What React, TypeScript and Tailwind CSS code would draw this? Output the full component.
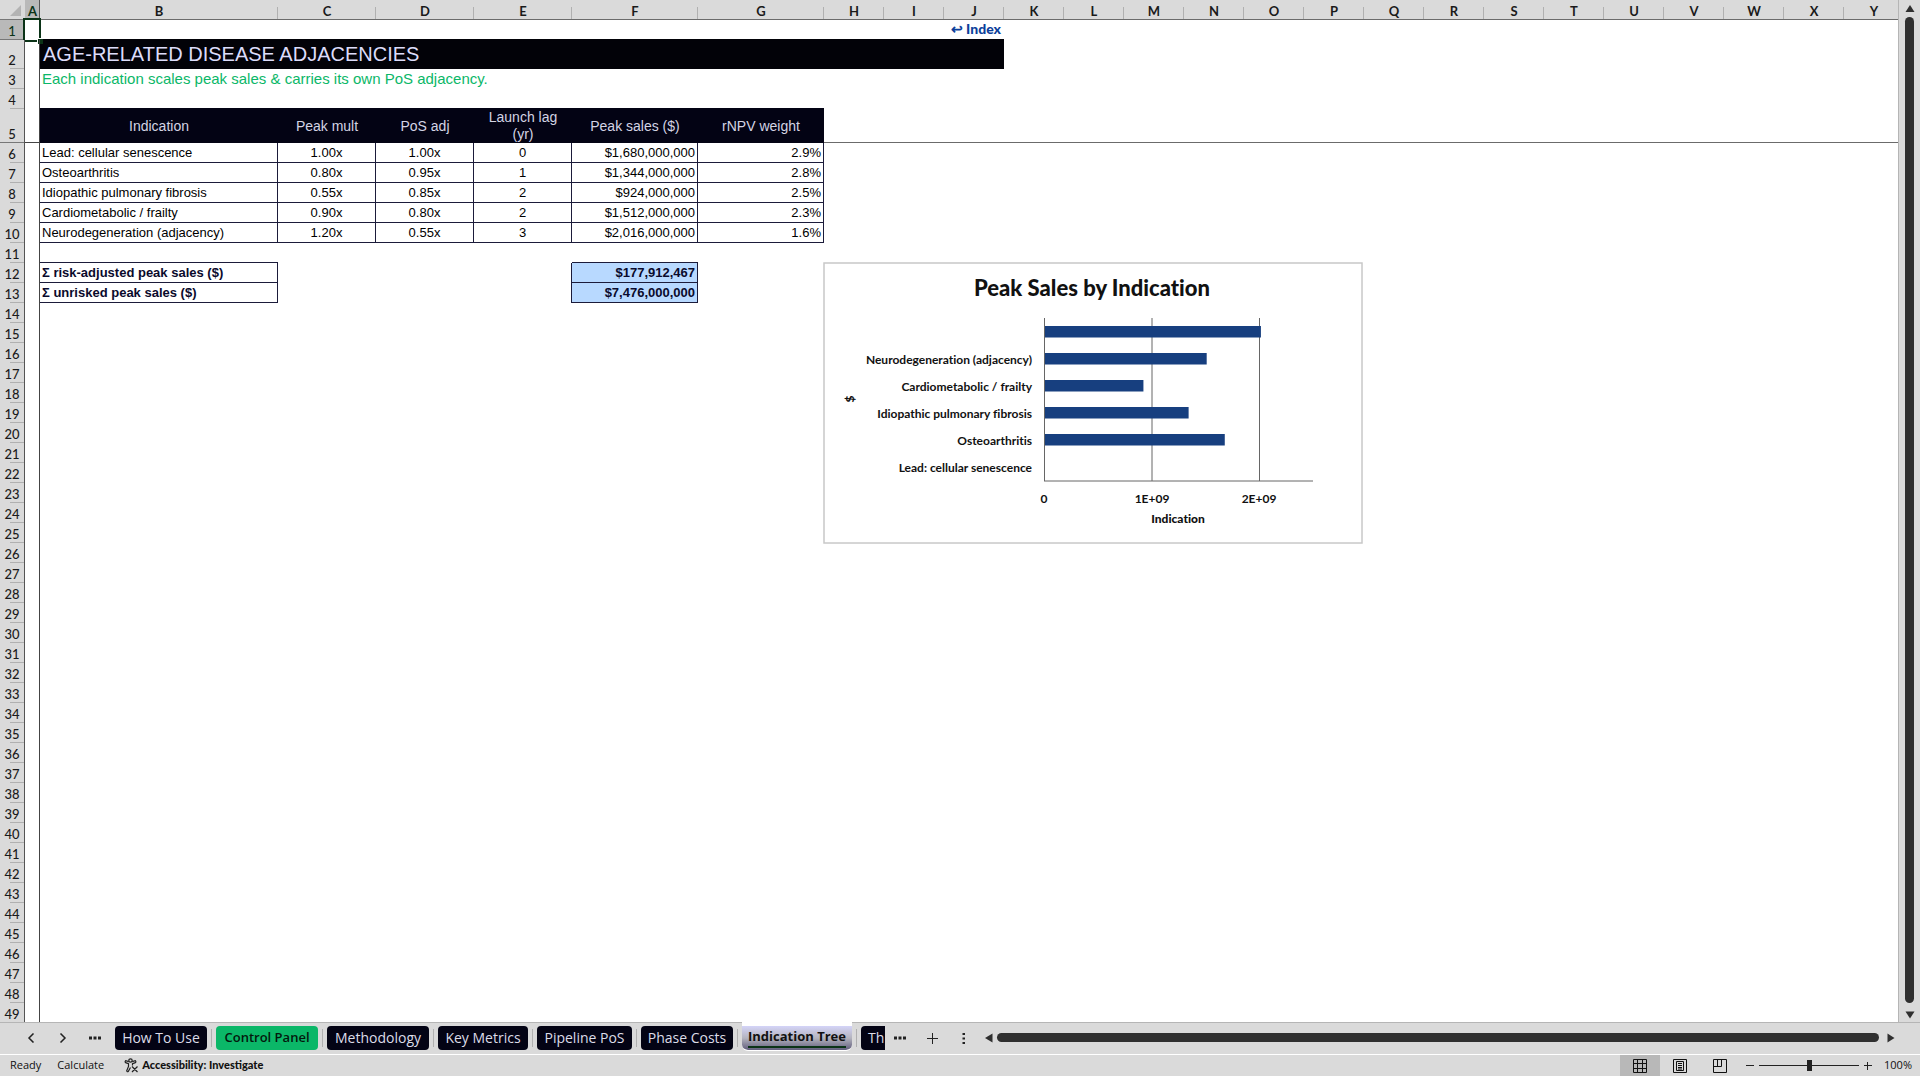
import React from "react";
import clsx from "clsx";

const columns = [
  { name: "A", width: "w-[15px]" },
  { name: "B", width: "w-[238px]" },
  { name: "C", width: "w-[98px]" },
  { name: "D", width: "w-[98px]" },
  { name: "E", width: "w-[98px]" },
  { name: "F", width: "w-[126px]" },
  { name: "G", width: "w-[126px]" },
  ..."HIJKLMNOPQRSTUVWXY".split("").map((name) => ({ name, width: "w-[60px]" })),
];

const indications = [
  ["Lead: cellular senescence", "1.00x", "1.00x", "0", "$1,680,000,000", "2.9%"],
  ["Osteoarthritis", "0.80x", "0.95x", "1", "$1,344,000,000", "2.8%"],
  ["Idiopathic pulmonary fibrosis", "0.55x", "0.85x", "2", "$924,000,000", "2.5%"],
  ["Cardiometabolic / frailty", "0.90x", "0.80x", "2", "$1,512,000,000", "2.3%"],
  ["Neurodegeneration (adjacency)", "1.20x", "0.55x", "3", "$2,016,000,000", "1.6%"],
];

const totals = [
  ["Σ risk-adjusted peak sales ($)", "$177,912,467"],
  ["Σ unrisked peak sales ($)", "$7,476,000,000"],
];

const tableHeads = ["Indication", "Peak mult", "PoS adj", "Launch lag (yr)", "Peak sales ($)", "rNPV weight"];

// bars run bottom-up in the sheet, so the last indication is drawn first
const bars = [2016, 1512, 924, 1344, 1680];
const barLabels = [
  "Neurodegeneration (adjacency)",
  "Cardiometabolic / frailty",
  "Idiopathic pulmonary fibrosis",
  "Osteoarthritis",
  "Lead: cellular senescence",
];

const tabs = [
  { name: "How To Use", width: "w-[92px]" },
  { name: "Control Panel", width: "w-[102px]" },
  { name: "Methodology", width: "w-[102px]" },
  { name: "Key Metrics", width: "w-[90px]" },
  { name: "Pipeline PoS", width: "w-[95px]" },
  { name: "Phase Costs", width: "w-[92px]" },
  { name: "Indication Tree", width: "w-[110px]" },
];

function RowHead({ row }: { row: number }) {
  return (
    <th
      scope="row"
      className={clsx(
        "relative border-r border-[#555] p-0 align-bottom font-[Lato] text-[13px] leading-[18px] font-medium",
        row === 1 ? "bg-[#b9b9b9] text-[#0b3317]" : "bg-[#dadada] text-[#1a1a1a]",
      )}
    >
      <span className="block w-6 text-center">{row}</span>
      <span
        className={clsx(
          "absolute right-0 bottom-0 h-px",
          row === 5 || row === 1 ? "w-6 bg-[#777]" : "w-3.5 bg-[#b0b0b0]",
        )}
      />
    </th>
  );
}

function RowCells({ row }: { row: number }) {
  if (row === 1) {
    return (
      <>
        <td colSpan={7} />
        <td
          colSpan={2}
          className="p-0 pr-[3px] align-top font-[Lato] text-sm leading-[18px] font-black text-[#0d3f9b]"
        >
          <a href="#index" className="block text-right">
            ↩ Index
          </a>
        </td>
        <td colSpan={15} />
      </>
    );
  }
  if (row === 2) {
    return (
      <>
        <td
          colSpan={9}
          className="bg-[#020208] p-0 pl-[3px] align-top text-xl leading-7 text-[#dcdcfa] shadow-[0_-1px_0_#020208]"
        >
          AGE-RELATED DISEASE ADJACENCIES
        </td>
        <td colSpan={15} />
      </>
    );
  }
  if (row === 3) {
    return (
      <td colSpan={24} className="p-0 pl-0.5 align-top text-[15px] leading-5 text-[#0bb768]">
        Each indication scales peak sales &amp; carries its own PoS adjacency.
      </td>
    );
  }
  if (row === 5) {
    return (
      <>
        {tableHeads.map((head) => (
          <th
            key={head}
            scope="col"
            className="bg-[#030314] px-2 py-0 text-[14px] leading-[17px] font-normal text-[#d4d4e4] shadow-[0_-1px_0_#030314]"
          >
            {head}
          </th>
        ))}
        <td colSpan={18} className="border-b border-[#6b6b6b]" />
      </>
    );
  }
  if (row >= 6 && row <= 10) {
    return (
      <>
        {indications[row - 6].map((value, i) => (
          <td
            key={i}
            className={clsx(
              "border-r border-b border-[#1b1b3a] p-0 text-[13px] leading-[19px] text-black",
              i === 0 && "pl-0.5",
              i > 0 && i < 4 && "text-center",
              i >= 4 && "pr-0.5 text-right",
            )}
          >
            {value}
          </td>
        ))}
        <td colSpan={18} />
      </>
    );
  }
  if (row === 12 || row === 13) {
    const [label, value] = totals[row - 12];
    return (
      <>
        <td className="border-r border-b border-[#1b1b3a] p-0 pl-0.5 text-[13px] leading-[19px] font-bold text-[#0a0a2c]">
          {label}
        </td>
        <td colSpan={2} />
        <td className="border-r border-[#1b1b3a]" />
        <td className="border-r border-b border-[#1b1b3a] bg-[#b8d9ff] p-0 pr-0.5 text-right text-[13px] leading-[19px] font-bold text-[#0a0a2c]">
          {value}
        </td>
        <td colSpan={19} />
      </>
    );
  }
  if (row === 11) {
    return (
      <>
        <td className="border-b border-[#1b1b3a]" />
        <td colSpan={3} />
        <td className="border-b border-[#1b1b3a]" />
        <td colSpan={19} />
      </>
    );
  }
  return <td colSpan={24} />;
}

function Sheet() {
  return (
    <table className="w-[1904px] table-fixed border-separate border-spacing-0 font-['Liberation_Sans',Arial,sans-serif]">
      <colgroup>
        <col className="w-[25px]" />
        {columns.map((col) => (
          <col key={col.name} className={col.width} />
        ))}
      </colgroup>
      <thead className="font-[Lato,sans-serif]">
        <tr className="h-5">
          <td className="border-b border-[#777] bg-[#dadada] p-0">
            <svg viewBox="0 0 24 19" className="block h-[19px] w-6">
              <path d="M21 5v11H10z" fill="#b3b3b3" />
            </svg>
          </td>
          {columns.map(({ name }) => (
            <th
              key={name}
              scope="col"
              className={clsx(
                "relative border-b border-[#6b6b6b] p-0 pt-[3px] text-[13px] leading-4 font-bold",
                name === "A" ? "bg-[#b9b9b9] text-[#0b3317]" : "bg-[#dadada] text-[#1a1a1a]",
              )}
            >
              {name}
              <span
                className={clsx(
                  "absolute right-0 bottom-0 w-px",
                  name === "A" ? "h-5 bg-[#555]" : "h-3 bg-[#b0b0b0]",
                )}
              />
            </th>
          ))}
        </tr>
      </thead>
      <tbody>
        {Array.from({ length: 49 }, (_, i) => i + 1).map((row) => (
          <tr key={row} className={row === 2 ? "h-[29px]" : row === 5 ? "h-[34px]" : "h-5"}>
            <RowHead row={row} />
            <td className={clsx("relative border-r border-[#444] p-0", row === 5 && "border-b")}>
              {row === 1 && (
                <span className="absolute -inset-0.5 border-2 border-[#0b3317]">
                  <span className="absolute -right-1 -bottom-1 size-1.5 border-t border-l border-white bg-[#0b3317]" />
                </span>
              )}
            </td>
            <RowCells row={row} />
          </tr>
        ))}
      </tbody>
    </table>
  );
}

function Chart() {
  return (
    <svg
      viewBox="0 0 540 282"
      className="absolute top-[262px] left-[823px] h-[282px] w-[540px] font-[Lato,sans-serif] [font-variant-ligatures:none]"
      fill="#111"
    >
      <rect x="1" y="1" width="538" height="280" fill="#fff" stroke="#c8c8c8" strokeWidth="1.5" />
      <text x="269" y="34" textAnchor="middle" fontSize="22" fontWeight="900">
        Peak Sales by Indication
      </text>
      <path d="M329 56v163M436.5 56v163" stroke="#666" />
      {bars.map((value, i) => (
        <rect key={value} x="221" y={64 + i * 27} width={value * 0.1076} height="11.5" fill="#173f7f" />
      ))}
      <path d="M221.5 56v163M221 219H490" stroke="#666" fill="none" />
      <g fontSize="12" fontWeight="700">
        {barLabels.map((label, i) => (
          <text key={label} x="209" y={102 + i * 27} textAnchor="end">
            {label}
          </text>
        ))}
        <text x="221" y="241" textAnchor="middle">
          0
        </text>
        <text x="329" y="241" textAnchor="middle">
          1E+09
        </text>
        <text x="436" y="241" textAnchor="middle">
          2E+09
        </text>
      </g>
      <text x="355" y="261" textAnchor="middle" fontSize="12" fontWeight="900">
        Indication
      </text>
      <text transform="translate(31 137) rotate(-90)" textAnchor="middle" fontSize="12" fontWeight="900">
        $
      </text>
    </svg>
  );
}

function VerticalScroll() {
  return (
    <div className="flex w-[22px] shrink-0 flex-col items-center gap-1 border-l border-[#b5b5b5] bg-[#dadada] pt-[5px] pb-[3px]">
      <svg viewBox="0 0 10 8" className="h-2 w-2.5 shrink-0" fill="#2f2f2f">
        <path d="M5 0 9.5 7h-9z" />
      </svg>
      <div className="w-[9px] flex-1 rounded-full bg-[#2f2f2f]" />
      <svg viewBox="0 0 10 8" className="mt-1 h-2 w-2.5 shrink-0" fill="#2f2f2f">
        <path d="M5 7.5.5.5h9z" />
      </svg>
    </div>
  );
}

function MoreDots() {
  return (
    <svg viewBox="0 0 12 4" className="block h-1 w-3" fill="#222">
      <path d="M0 .5h3v3H0zM4.5.5h3v3h-3zM9 .5h3v3H9z" />
    </svg>
  );
}

function TabBar() {
  return (
    <nav className="flex h-8 shrink-0 items-center border-t border-[#b5b5b5] bg-[#dadada] pb-0.5 font-['Open_Sans',sans-serif] text-sm">
      <div className="flex w-[115px] shrink-0 items-center gap-6 pl-[27px]">
        <button aria-label="Previous sheet">
          <svg viewBox="0 0 8 10" className="block h-2.5 w-2" fill="none" stroke="#222" strokeWidth="1.5">
            <path d="M6.5.5 2 5l4.5 4.5" />
          </svg>
        </button>
        <button aria-label="Next sheet">
          <svg viewBox="0 0 8 10" className="block h-2.5 w-2" fill="none" stroke="#222" strokeWidth="1.5">
            <path d="M1.5.5 6 5 1.5 9.5" />
          </svg>
        </button>
        <button aria-label="All sheets" className="-ml-0.5">
          <MoreDots />
        </button>
      </div>
      <div className="-mt-px flex h-[31px] w-[770px] shrink-0 items-start overflow-hidden pt-1">
        {tabs.map(({ name, width }) => (
          <React.Fragment key={name}>
            {name === "Indication Tree" ? (
              <button
                className={clsx(
                  "-mt-1 h-[29px] shrink-0 rounded-b-md border-t-4 border-b border-white bg-gradient-to-b from-[#d4d4f8] via-[#b4b4be] to-[#625e7c] bg-clip-padding px-1.5 text-[13px] font-bold whitespace-nowrap text-[#111]",
                  width,
                )}
              >
                <span className="block border-b-2 border-[#0b3317] leading-[19px]">{name}</span>
              </button>
            ) : (
              <button
                className={clsx(
                  "h-6 shrink-0 rounded text-center whitespace-nowrap",
                  width,
                  name === "Control Panel"
                    ? "bg-[#0bb768] text-[13px] font-semibold text-[#04170d]"
                    : "bg-[#030314] text-[#dcdce8]",
                )}
              >
                {name}
              </button>
            )}
            <span className="mx-1 mt-[3px] h-[18px] w-px shrink-0 bg-[#b0b0b0]" />
          </React.Fragment>
        ))}
        <button className="h-6 w-6 shrink-0 rounded-l bg-[#030314] pl-[7px] text-left text-[#dcdce8]">Th</button>
      </div>
      <div className="flex w-[100px] shrink-0 items-center pl-[9px]">
        <button aria-label="More sheets">
          <MoreDots />
        </button>
        <button aria-label="New sheet" className="ml-5">
          <svg viewBox="0 0 12 12" className="block size-3" stroke="#222">
            <path d="M6.5 1v11M1 6.5h11" />
          </svg>
        </button>
        <span className="ml-6">
          <svg viewBox="0 0 4 12" className="block h-3 w-1" fill="#222">
            <path d="M.5 1h2.5v2H.5zM.5 5.5h2.5v2H.5zM.5 10h2.5v2H.5z" />
          </svg>
        </span>
      </div>
      <div className="flex flex-1 items-center gap-1 pr-[25px]">
        <svg viewBox="0 0 8 10" className="h-2.5 w-2 shrink-0" fill="#2f2f2f">
          <path d="M0 5 7.5.5v9z" />
        </svg>
        <div className="h-[9px] flex-1 rounded-full bg-[#2f2f2f]" />
        <svg viewBox="0 0 8 10" className="ml-1 h-2.5 w-2 shrink-0" fill="#2f2f2f">
          <path d="M7.5 5 .5.5v9z" />
        </svg>
      </div>
    </nav>
  );
}

function StatusBar() {
  return (
    <footer className="flex h-[22px] shrink-0 items-center border-t border-white bg-[#dadada] font-['Open_Sans',sans-serif] text-[11px] text-[#111]">
      <span className="pl-2.5">Ready</span>
      <span className="pl-4">Calculate</span>
      <button className="flex items-center gap-[3px] pl-5 font-[Lato] text-[11px] font-black">
        <svg viewBox="0 0 15 15" className="size-[15px]" fill="none" stroke="#222" strokeWidth="1.2">
          <circle cx="6.5" cy="2.5" r="1.7" />
          <path d="M4.8 3.6 1.7 2.6Q.6 3.8 1.6 4.6L4.5 5.7V8.5L2.7 12.8Q3.2 14.2 4.2 13.5L6.5 9.5M8.2 3.6 11.3 2.6Q12.4 3.8 11.4 4.6L8.5 5.7V7.5M8 8.5l5.5 5.5M13.5 8.5 8 14" />
        </svg>
        Accessibility: Investigate
      </button>
      <div className="ml-auto flex h-full items-center">
        <button aria-label="Normal view" className="flex h-full w-10 items-center justify-center bg-[#b8b8b8]">
          <svg viewBox="0 0 14 14" className="size-3.5" fill="none" stroke="#111">
            <path d="M.5.5h13v13H.5zM4.5.5v13M9.5.5v13M.5 4.5h13M.5 9.5h13" />
          </svg>
        </button>
        <button aria-label="Page layout" className="flex h-full w-10 items-center justify-center">
          <svg viewBox="0 0 14 14" className="size-3.5" fill="none" stroke="#111">
            <path d="M.5.5h13v13H.5zM3.5 2.5h7v9h-7zM5 4.5h4M5 6.5h4M5 8.5h4M5 10h4" />
          </svg>
        </button>
        <button aria-label="Page break preview" className="flex h-full w-10 items-center justify-center">
          <svg viewBox="0 0 14 14" className="size-3.5" fill="none" stroke="#111">
            <path d="M.5.5h13v13H.5zM.5 7.5h8V.5M4.5.5v7" />
          </svg>
        </button>
        <button aria-label="Zoom out" className="pl-1.5">
          <svg viewBox="0 0 8 8" className="block size-2" stroke="#222">
            <path d="M0 3.5h8" />
          </svg>
        </button>
        <input
          type="range"
          aria-label="Zoom"
          min={0}
          max={100}
          defaultValue={50}
          className="mx-[5px] h-3 w-[100px] appearance-none bg-transparent [&::-webkit-slider-runnable-track]:h-px [&::-webkit-slider-runnable-track]:bg-[#222] [&::-webkit-slider-thumb]:-mt-[5px] [&::-webkit-slider-thumb]:h-[11px] [&::-webkit-slider-thumb]:w-[5px] [&::-webkit-slider-thumb]:appearance-none [&::-webkit-slider-thumb]:bg-[#222]"
        />
        <button aria-label="Zoom in">
          <svg viewBox="0 0 8 8" className="block size-2" stroke="#222">
            <path d="M0 3.5h8M3.5 0v8" />
          </svg>
        </button>
        <span className="w-12 pr-2 text-right">100%</span>
      </div>
    </footer>
  );
}

export default function App() {
  return (
    <div className="flex h-screen flex-col overflow-hidden bg-white">
      <main className="flex min-h-0 flex-1">
        <div className="relative min-w-0 flex-1 overflow-hidden">
          <Sheet />
          <Chart />
        </div>
        <VerticalScroll />
      </main>
      <TabBar />
      <StatusBar />
    </div>
  );
}
